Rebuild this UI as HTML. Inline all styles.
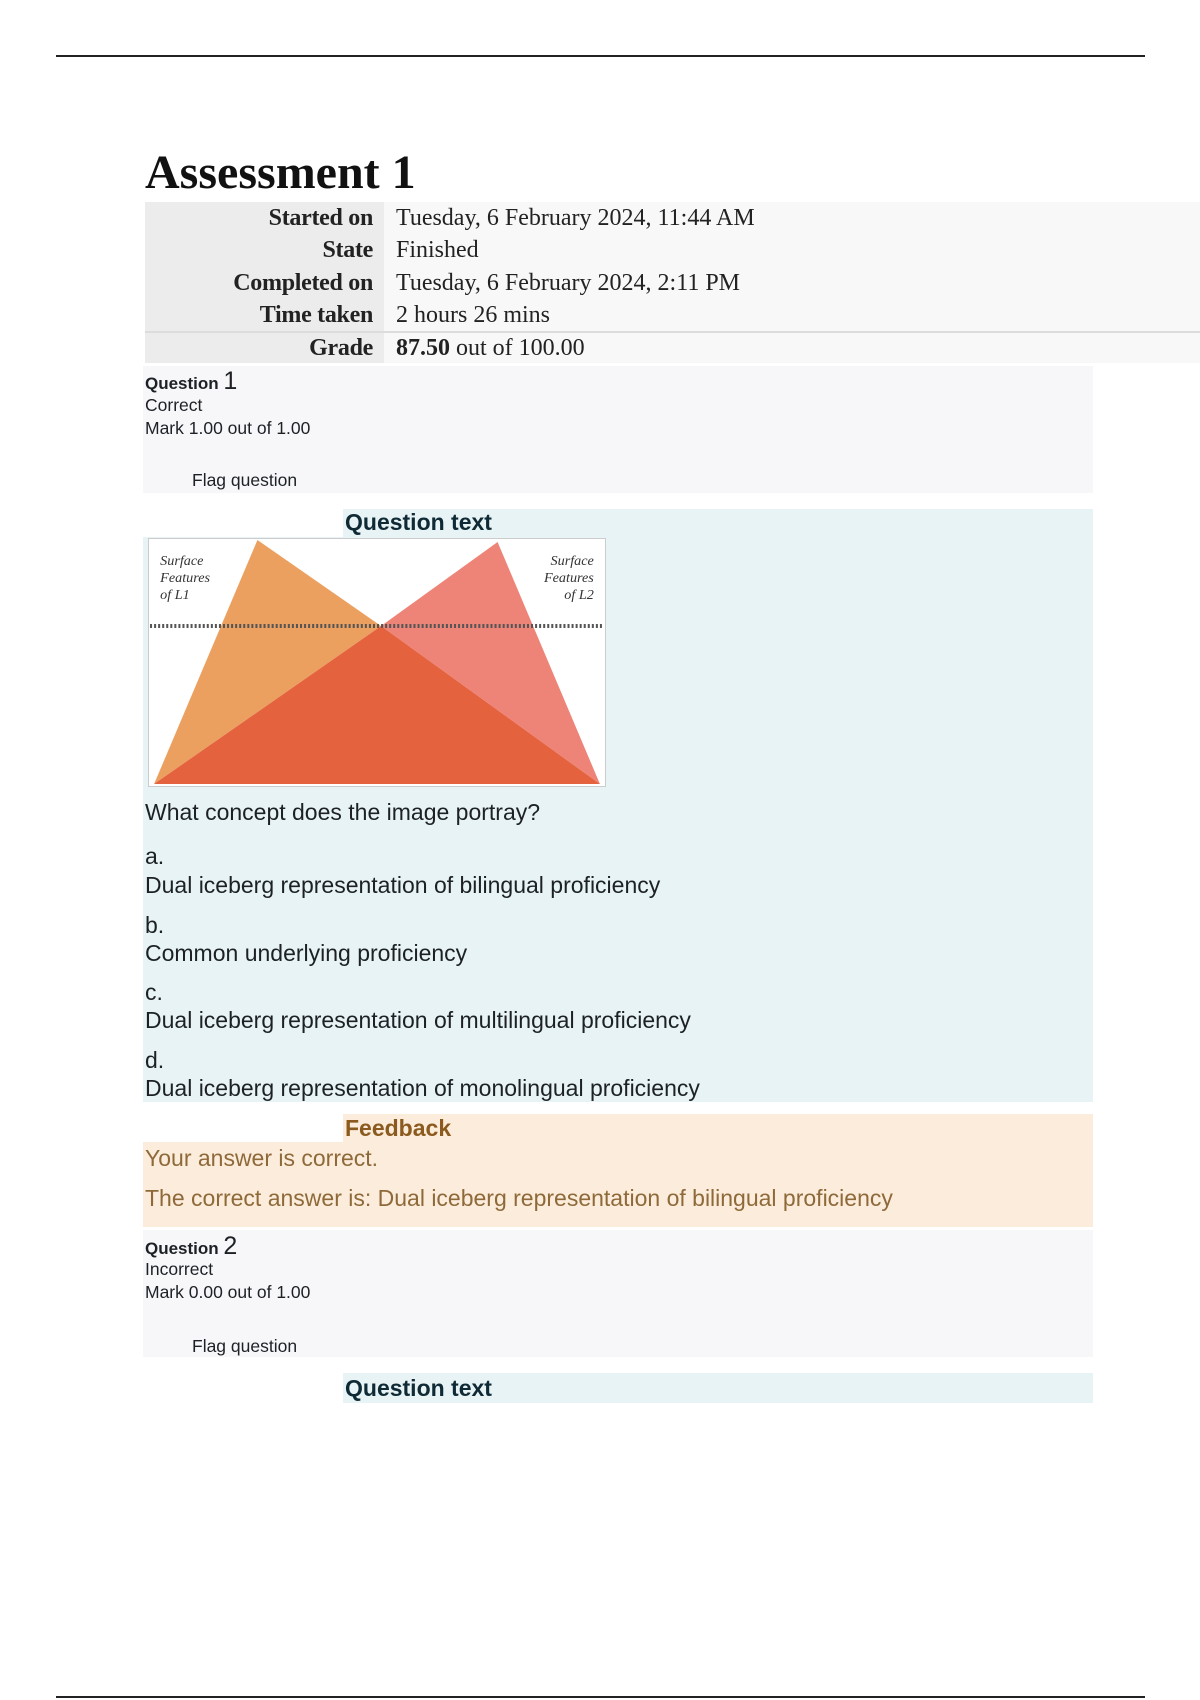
<!DOCTYPE html>
<html><head><meta charset="utf-8"><style>
body{margin:0;width:1200px;height:1700px;background:#fff;position:relative;overflow:hidden;font-family:"Liberation Sans",sans-serif;color:#1d2125}
.a{position:absolute;white-space:nowrap}
.t{line-height:30px;height:30px}
.serif{font-family:"Liberation Serif",serif;font-size:24px;color:#222}
.lab{font-weight:bold;text-align:right;width:227px;left:146px;letter-spacing:-0.3px}
.val{left:396px}
.s{font-size:17.5px;line-height:22px}
.m{font-size:23px;line-height:28px}
</style></head><body>
<div class="a" style="left:56px;top:55px;width:1089px;height:2px;background:#222"></div>
<div class="a" style="left:56px;top:1696px;width:1089px;height:2px;background:#222"></div>

<div class="a serif" style="left:145px;top:146px;font-size:48px;font-weight:bold;line-height:54px;color:#111">Assessment 1</div>

<div class="a" style="left:145px;top:202px;width:239px;height:161px;background:#ececec"></div>
<div class="a" style="left:384px;top:202px;width:816px;height:161px;background:#f8f8f8"></div>
<div class="a" style="left:145px;top:331px;width:1055px;height:2px;background:#dcdcdc"></div>
<div class="a serif t lab" style="top:203px">Started on</div>
<div class="a serif t val" style="top:203px">Tuesday, 6 February 2024, 11:44 AM</div>
<div class="a serif t lab" style="top:235px">State</div>
<div class="a serif t val" style="top:235px">Finished</div>
<div class="a serif t lab" style="top:268px">Completed on</div>
<div class="a serif t val" style="top:268px">Tuesday, 6 February 2024, 2:11 PM</div>
<div class="a serif t lab" style="top:300px">Time taken</div>
<div class="a serif t val" style="top:300px">2 hours 26 mins</div>
<div class="a serif t lab" style="top:333px">Grade</div>
<div class="a serif t val" style="top:333px"><b>87.50</b> out of 100.00</div>

<div class="a" style="left:143px;top:366px;width:950px;height:127px;background:#f7f7f9"></div>
<div class="a" style="left:145px;top:366px;line-height:30px;font-size:17px;font-weight:bold">Question <span style="font-size:25px;font-weight:normal">1</span></div>
<div class="a s" style="left:145px;top:394px">Correct</div>
<div class="a s" style="left:145px;top:417px">Mark 1.00 out of 1.00</div>
<div class="a s" style="left:192px;top:469px">Flag question</div>

<div class="a" style="left:143px;top:509px;width:950px;height:593px;background:#e7f3f5"></div>
<div class="a" style="left:143px;top:509px;width:200px;height:28px;background:#fff"></div>
<div class="a" style="left:345px;top:508px;font-size:23px;font-weight:bold;line-height:28px;color:#0f2a35">Question text</div>
<svg class="a" style="left:148px;top:538px" width="458" height="249" viewBox="0 0 452 249" preserveAspectRatio="none">
<rect x="0.5" y="0.5" width="451" height="248" fill="#fff" stroke="#ccc"/>
<polygon points="6,246 108,2 230,88" fill="#eca060"/>
<polygon points="230,88 345,4 446,246" fill="#ee8478"/>
<polygon points="6,246 230,88 446,246" fill="#e4623e"/>
<line x1="2" y1="88" x2="450" y2="88" stroke="#555" stroke-width="4" stroke-dasharray="2,2"/>
<g font-family="Liberation Serif,serif" font-style="italic" font-size="14" fill="#333">
<text x="12" y="27">Surface</text><text x="12" y="44">Features</text><text x="12" y="61">of L1</text>
<text x="440" y="27" text-anchor="end">Surface</text><text x="440" y="44" text-anchor="end">Features</text><text x="440" y="61" text-anchor="end">of L2</text></g>
</svg>
<div class="a m" style="left:145px;top:798px">What concept does the image portray?</div>
<div class="a m" style="left:145px;top:842px">a.</div>
<div class="a m" style="left:145px;top:871px">Dual iceberg representation of bilingual proficiency</div>
<div class="a m" style="left:145px;top:911px">b.</div>
<div class="a m" style="left:145px;top:939px">Common underlying proficiency</div>
<div class="a m" style="left:145px;top:978px">c.</div>
<div class="a m" style="left:145px;top:1006px">Dual iceberg representation of multilingual proficiency</div>
<div class="a m" style="left:145px;top:1046px">d.</div>
<div class="a m" style="left:145px;top:1074px">Dual iceberg representation of monolingual proficiency</div>

<div class="a" style="left:143px;top:1114px;width:950px;height:113px;background:#fcecdb"></div>
<div class="a" style="left:143px;top:1114px;width:200px;height:28px;background:#fff"></div>
<div class="a" style="left:345px;top:1114px;font-size:23px;font-weight:bold;line-height:28px;color:#8a5a1e">Feedback</div>
<div class="a m" style="left:145px;top:1144px;color:#8e6a3a">Your answer is correct.</div>
<div class="a m" style="left:145px;top:1184px;color:#8e6a3a">The correct answer is: Dual iceberg representation of bilingual proficiency</div>

<div class="a" style="left:143px;top:1230px;width:950px;height:127px;background:#f7f7f9"></div>
<div class="a" style="left:145px;top:1231px;line-height:30px;font-size:17px;font-weight:bold">Question <span style="font-size:25px;font-weight:normal">2</span></div>
<div class="a s" style="left:145px;top:1258px">Incorrect</div>
<div class="a s" style="left:145px;top:1281px">Mark 0.00 out of 1.00</div>
<div class="a s" style="left:192px;top:1335px">Flag question</div>
<div class="a" style="left:343px;top:1373px;width:750px;height:30px;background:#e7f3f5"></div>
<div class="a" style="left:345px;top:1374px;font-size:23px;font-weight:bold;line-height:28px;color:#0f2a35">Question text</div>
</body></html>
